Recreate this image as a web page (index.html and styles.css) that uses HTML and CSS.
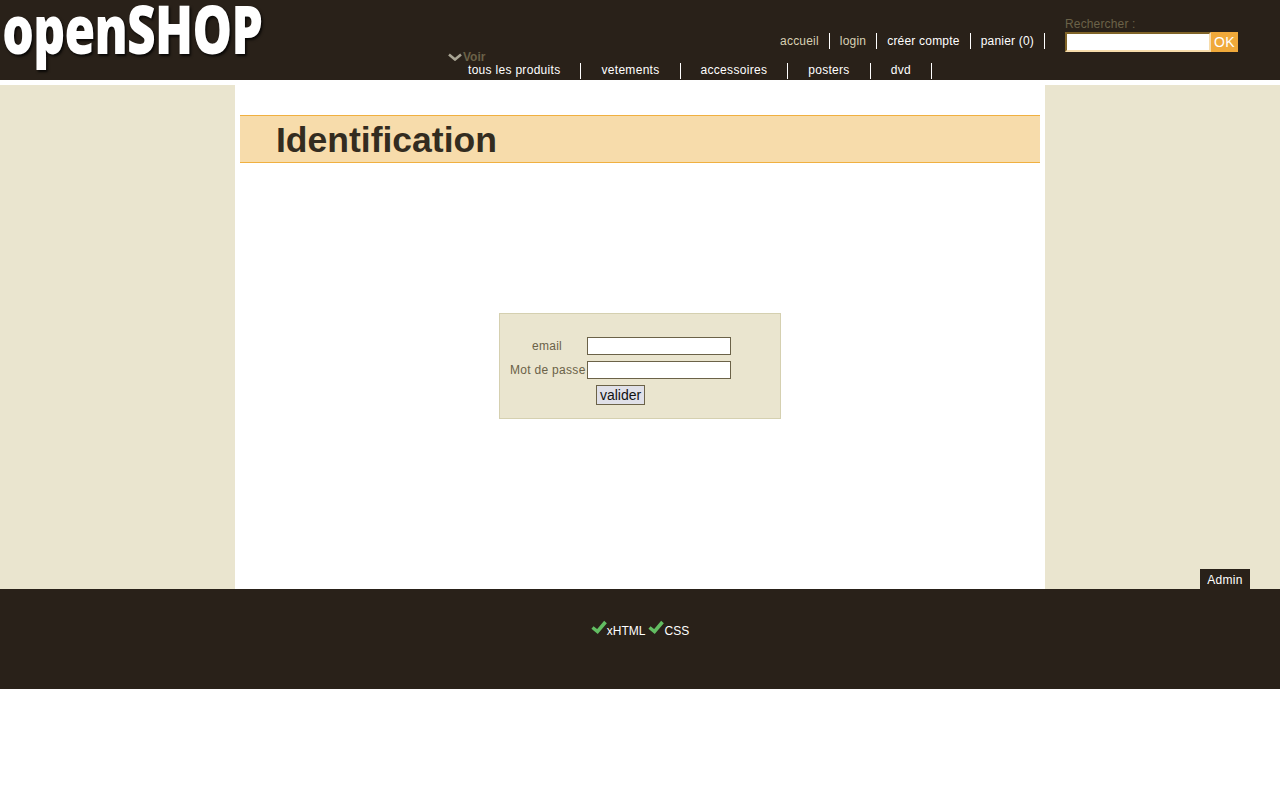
FILE: index.html
```html
<!doctype html>
<html lang="fr">
  <head>
    <meta charset="UTF-8" />
    <title>openSHOP - Identification</title>
    <link rel="stylesheet" href="styles.css">
  </head>
  <body>
    <div class="header">
      <div class="logo-box"><a class="logo" href="#">openSHOP</a></div>
      <div class="header-nav">
        <div class="header-top">
          <ul class="top-menu">
            <li><a class="dim" href="#">accueil</a></li>
            <li><a class="dim" href="#">login</a></li>
            <li><a href="#">créer compte</a></li>
            <li><a href="#">panier (0)</a></li>
          </ul>
          <form class="search">
            <label class="search-label" for="q">Rechercher :</label>
            <div class="search-row">
              <input class="search-input" id="q" type="text">
              <button class="search-btn" type="button">OK</button>
            </div>
          </form>
        </div>
        <div class="voir">
          <svg class="voir-icon" width="14" height="8" viewBox="0 0 14 8"><path d="M1 1.5 L7 6.5 L13 1.5" fill="none" stroke="#a9a594" stroke-width="2.6"/></svg>
          Voir
        </div>
        <ul class="main-menu">
          <li><a href="#">tous les produits</a></li>
          <li><a href="#">vetements</a></li>
          <li><a href="#">accessoires</a></li>
          <li><a href="#">posters</a></li>
          <li><a href="#">dvd</a></li>
        </ul>
      </div>
    </div>

    <div class="page">
      <div class="side"></div>
      <div class="content">
        <h1 class="page-title">Identification</h1>
        <form class="login-box">
          <label class="login-label" for="email">email</label>
          <input class="login-input" id="email" type="text">
          <label class="login-label" for="pass">Mot de passe</label>
          <input class="login-input" id="pass" type="password">
          <button class="login-btn" type="button">valider</button>
        </form>
      </div>
      <div class="side side-right">
        <a class="admin" href="#">Admin</a>
      </div>
    </div>

    <div class="footer">
      <a class="valid" href="#">
        <svg width="16" height="14" viewBox="0 0 16 14"><path d="M1.5 7.5 L6.5 11.5 L14.5 2" fill="none" stroke="#62bd62" stroke-width="3.5"/></svg>xHTML
      </a>
      <a class="valid" href="#">
        <svg width="16" height="14" viewBox="0 0 16 14"><path d="M1.5 7.5 L6.5 11.5 L14.5 2" fill="none" stroke="#62bd62" stroke-width="3.5"/></svg>CSS
      </a>
    </div>
  </body>
</html>
```

FILE: styles.css
```css
* {
  margin: 0;
  padding: 0;
  box-sizing: border-box;
}

body {
  font-family: 'Liberation Sans', Arial, sans-serif;
  font-size: 12px;
  background: white;
  color: #292119;
}

a {
  color: white;
  text-decoration: none;
}

ul {
  list-style: none;
}

.header {
  display: flex;
  height: 80px;
  background: #292119;
}

.logo-box {
  width: 448px;
  flex: none;
}

.logo {
  display: block;
  width: 380px;
  padding-left: 3px;
  font-family: 'Open Sans', sans-serif;
  font-size: 67px;
  font-weight: 800;
  line-height: 56px;
  letter-spacing: -1px;
  transform: scaleX(0.743);
  transform-origin: left top;
  text-shadow: 2px 2px 3px rgba(0,0,0,0.8);
}

.header-nav {
  flex: 1;
  display: flex;
  flex-direction: column;
}

.header-top {
  display: flex;
  justify-content: flex-end;
  height: 51px;
}

.top-menu {
  display: flex;
  align-self: flex-start;
  margin-top: 33px;
}

.top-menu li {
  height: 16px;
  line-height: 16px;
  padding: 0 10px;
  border-right: 1px solid white;
  letter-spacing: 0.2px;
}

.top-menu .dim {
  color: #d8d0b4;
}

.search {
  width: 215px;
  margin-left: 20px;
  padding-top: 17px;
}

.search-label {
  display: block;
  height: 15px;
  line-height: 14px;
  color: #6b6248;
  letter-spacing: 0.15px;
}

.search-row {
  display: flex;
}

.search-input {
  width: 146px;
  height: 20px;
  background: white;
  border: 2px solid;
  border-color: #806428 #f7dcab #f7dcab #806428;
}

.search-btn {
  width: 27px;
  height: 20px;
  background: #f0a93a;
  border: none;
  color: white;
  font-family: 'Liberation Sans', Arial, sans-serif;
  font-size: 14px;
  letter-spacing: 0.5px;
}

.voir {
  display: flex;
  align-items: center;
  gap: 1px;
  height: 12px;
  color: #6b6248;
  font-size: 12px;
  font-weight: bold;
}

.main-menu {
  display: flex;
}

.main-menu li {
  height: 16px;
  line-height: 14px;
  padding: 0 20px;
  border-right: 1px solid white;
  letter-spacing: 0.3px;
}

.page {
  display: flex;
  margin-top: 5px;
  height: 504px;
}

.side {
  width: 235px;
  flex: none;
  background: #eae5cf;
}

.side-right {
  display: flex;
  justify-content: flex-end;
  align-items: flex-end;
  padding-right: 30px;
}

.admin {
  display: block;
  width: 50px;
  height: 20px;
  line-height: 22px;
  text-align: center;
  background: #292119;
  letter-spacing: 0.3px;
}

.content {
  flex: 1;
  padding: 30px 5px 0;
}

.page-title {
  height: 48px;
  padding-left: 36px;
  background: #f7dcab;
  border-top: 1px solid #f0b040;
  border-bottom: 1px solid #f0b040;
  font-size: 35.5px;
  line-height: 48px;
  color: #332c20;
}

.login-box {
  display: grid;
  grid-template-columns: 74px 144px;
  column-gap: 3px;
  row-gap: 6px;
  grid-auto-rows: 18px;
  align-items: center;
  width: 282px;
  height: 106px;
  margin: 150px auto 0;
  padding: 23px 0 0 10px;
  background: #eae5cf;
  border: 1px solid #d5d0b0;
}

.login-label {
  text-align: center;
  white-space: nowrap;
  color: #6b6248;
  letter-spacing: 0.3px;
}

.login-input {
  height: 18px;
  background: white;
  border: 1px solid #6b6248;
}

.login-btn {
  grid-column: 2;
  justify-self: start;
  align-self: start;
  width: 49px;
  height: 20px;
  margin-left: 9px;
  background: #e0e0e8;
  border: 1px solid #6b6248;
  color: #111;
  font-family: 'Liberation Sans', Arial, sans-serif;
  font-size: 14px;
}

.footer {
  display: flex;
  justify-content: center;
  gap: 3px;
  height: 100px;
  padding-top: 31px;
  background: #292119;
}

.valid {
  display: flex;
  align-items: flex-start;
  height: 20px;
  line-height: 22px;
}
```
